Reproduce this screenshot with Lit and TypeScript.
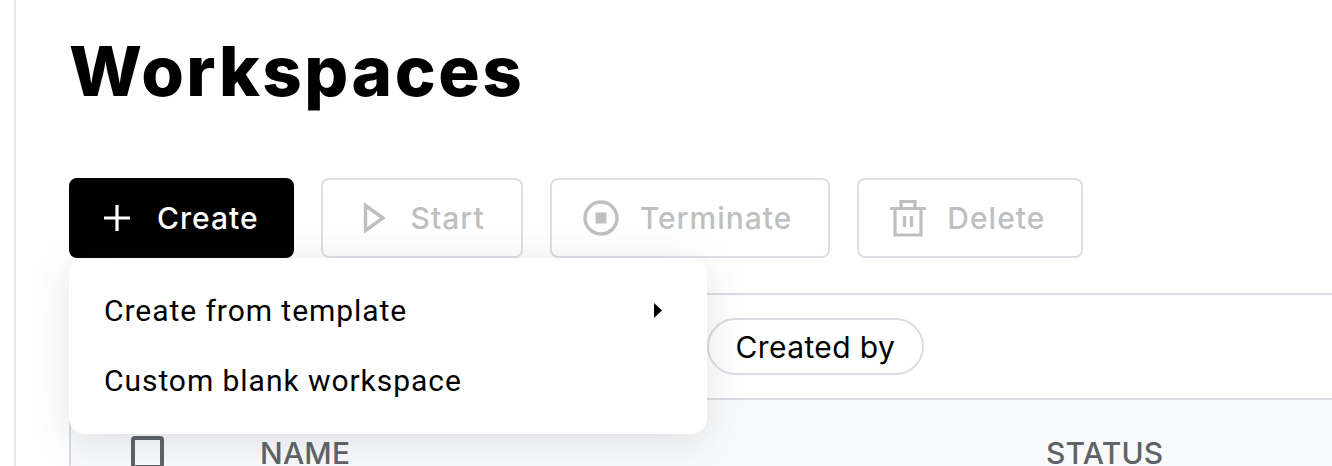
import { LitElement, html, css } from 'lit';
import { customElement } from 'lit/decorators.js';

// all toolbar icons share a 36px box so the buttons line up
const plusIcon = html`<svg width="36" height="36" viewBox="0 0 36 36"><path d="M15 5 V31 M2 18 H28" stroke="currentColor" stroke-width="3.2" fill="none"/></svg>`;
const playIcon = html`<svg width="36" height="36" viewBox="0 0 36 36"><path d="M11.5 5.5 L29 18 L11.5 30.5 Z" fill="none" stroke="currentColor" stroke-width="3.4"/></svg>`;
const stopIcon = html`<svg width="36" height="36" viewBox="0 0 36 36"><circle cx="18" cy="18" r="16" fill="none" stroke="currentColor" stroke-width="3.4"/><rect x="12.5" y="12.5" width="11" height="11" fill="currentColor"/></svg>`;
const trashIcon = html`<svg width="36" height="38" viewBox="0 0 36 38"><path d="M0 9.5 H36 M5 9.5 V36 H31 V9.5 M11 9.5 V2.5 H25 V9.5 M14.5 17 V28 M21.5 17 V28" fill="none" stroke="currentColor" stroke-width="3.2"/></svg>`;

@customElement('app-root')
export class AppRoot extends LitElement {
  static styles = css`
    :host {
      display: block;
      height: 466px;
      overflow: hidden;
      background: #fff;
      font-family: Inter, 'Liberation Sans', sans-serif;
      color: #000;
    }
    .page {
      position: relative;
      height: 466px;
      margin-left: 14px;
      padding: 32px 0 0 53px;
      border-left: 2px solid #e5e7eb;
      box-sizing: border-box;
    }
    h1 {
      margin: 0;
      height: 146px;
      font-size: 69px;
      line-height: 78px;
      font-weight: 800;
      letter-spacing: 2.5px;
    }
    .actions {
      display: flex;
      gap: 27px;
      height: 80px;
    }
    .btn {
      display: flex;
      align-items: center;
      gap: 21px;
      box-sizing: border-box;
      padding: 0 36px 0 31px;
      border: 2px solid #dcdfe4;
      border-radius: 8px;
      font-size: 30px;
      font-weight: 500;
      letter-spacing: 1px;
      color: #bfbfbf;
      background: #fff;
    }
    .btn.primary {
      gap: 19px;
      padding-right: 33px;
      background: #000;
      border-color: #000;
      color: #fff;
    }
    .panel {
      margin-top: 35px;
      border-top: 2px solid #d9dde3;
    }
    .filters {
      display: flex;
      height: 105px;
      align-items: center;
      padding: 0 0 0 638px;
      box-sizing: border-box;
      border-bottom: 2px solid #d9dde3;
    }
    .chip {
      display: flex;
      align-items: center;
      height: 57px;
      box-sizing: border-box;
      padding: 0 26.5px;
      border: 2px solid #d9dde3;
      border-radius: 29px;
      font-size: 30px;
      letter-spacing: 0.4px;
    }
    .thead {
      display: flex;
      align-items: center;
      height: 105px;
      box-sizing: border-box;
      padding: 0 0 0 60px;
      background: #f9fafb;
      border-left: 2px solid #d9dde3;
      font-size: 30px;
      line-height: 26px;
      font-weight: 500;
      letter-spacing: 0.2px;
      color: #5f6368;
    }
    .check {
      width: 33px;
      height: 33px;
      box-sizing: border-box;
      border: 4px solid #5f6368;
      border-radius: 4px;
      margin-right: 96px;
    }
    .name {
      width: 786px;
    }
    .menu {
      position: absolute;
      left: 53px;
      top: 258px;
      width: 638px;
      height: 176px;
      box-sizing: border-box;
      padding: 17px 0;
      background: #fff;
      border-radius: 16px;
      box-shadow: 0 8px 40px rgba(60, 64, 80, 0.14);
      font-family: Roboto, sans-serif;
      font-size: 30px;
      letter-spacing: 0.95px;
    }
    .item {
      display: flex;
      align-items: center;
      justify-content: space-between;
      height: 70px;
      padding: 0 45px 0 35px;
    }
  `;

  render() {
    return html`
      <div class="page">
        <h1>Workspaces</h1>
        <div class="actions">
          <div class="btn primary">${plusIcon} Create</div>
          <div class="btn">${playIcon} Start</div>
          <div class="btn">${stopIcon} Terminate</div>
          <div class="btn">${trashIcon} Delete</div>
        </div>
        <div class="panel">
          <div class="filters"><div class="chip">Created by</div></div>
          <div class="thead">
            <div class="check"></div>
            <div class="name">NAME</div>
            <div>STATUS</div>
          </div>
        </div>
        <div class="menu">
          <div class="item">
            Create from template
            <svg width="8" height="15" viewBox="0 0 8 15"><path d="M0 0 L8 7.5 L0 15 Z" fill="#000"/></svg>
          </div>
          <div class="item">Custom blank workspace</div>
        </div>
      </div>
    `;
  }
}
